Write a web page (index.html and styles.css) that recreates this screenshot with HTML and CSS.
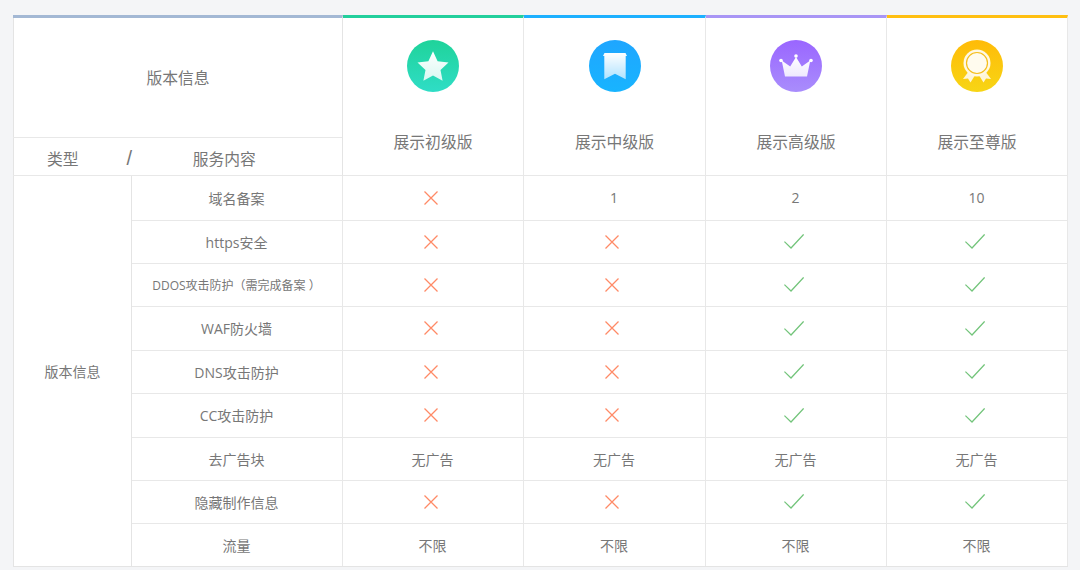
FILE: index.html
```html
<!DOCTYPE html>
<html lang="zh-CN">
<head>
<meta charset="utf-8">
<title>版本信息</title>
<link rel="stylesheet" href="styles.css">
</head>
<body>
<svg class="defs" width="0" height="0" aria-hidden="true">
  <defs>
    <symbol id="no" viewBox="0 0 14 14"><path d="M.5.5l13 13M13.5.5l-13 13" fill="none" stroke="currentColor" stroke-width="1.25"/></symbol>
    <symbol id="yes" viewBox="0 0 20 15"><path d="M.4 7.600l6.600 6.400L19.600.4" fill="none" stroke="currentColor" stroke-width="1.25"/></symbol>
    <linearGradient id="fade" x1="0" y1="0" x2="0" y2="1"><stop offset="0" stop-color="#fff"/><stop offset="1" stop-color="#fff" stop-opacity=".82"/></linearGradient>
    <linearGradient id="fadeBlue" x1="0" y1="0" x2="0" y2="1"><stop offset="0" stop-color="#fff"/><stop offset="1" stop-color="#fff" stop-opacity=".65"/></linearGradient>
  </defs>
</svg>
<main class="plans">
  <div class="corner">
    <div class="corner-title">版本信息</div>
    <div class="corner-legend"><span>类型</span><span class="slash">/</span><span>服务内容</span></div>
  </div>
  <div class="plan plan-green">
    <svg class="badge" viewBox="0 0 52 52"><defs><linearGradient id="g1" x1="0" y1="0" x2="0" y2="1"><stop offset="0" stop-color="#1fd39a"/><stop offset="1" stop-color="#2fddc6"/></linearGradient></defs><circle cx="26" cy="26" r="26" fill="url(#g1)"/><path d="M26 11.200l4.600 10 10.900 1.300-8 7.500 2.100 10.800-9.600-5.400-9.600 5.400 2.100-10.800-8-7.500 10.900-1.300z" fill="url(#fade)" stroke-linejoin="round"/></svg>
    <div class="plan-name">展示初级版</div>
  </div>
  <div class="plan plan-blue">
    <svg class="badge" viewBox="0 0 52 52"><defs><linearGradient id="g2" x1="0" y1="0" x2="0" y2="1"><stop offset="0" stop-color="#1fa6ff"/><stop offset="1" stop-color="#18b4ff"/></linearGradient></defs><circle cx="26" cy="26" r="26" fill="url(#g2)"/><path d="M15.500 13h21l1.500 3h-1.300v23.300L26 33.800l-10.700 5.500V16H14z" fill="url(#fadeBlue)"/></svg>
    <div class="plan-name">展示中级版</div>
  </div>
  <div class="plan plan-purple">
    <svg class="badge" viewBox="0 0 52 52"><defs><linearGradient id="g3" x1="0" y1="0" x2="0" y2="1"><stop offset="0" stop-color="#9a66ff"/><stop offset="1" stop-color="#a98dfc"/></linearGradient></defs><circle cx="26" cy="26" r="26" fill="url(#g3)"/><path d="M26 17l5.800 9.600 8.500-6.200-3.300 16.100H15l-3.300-16.100 8.500 6.200z" fill="url(#fade)"/><circle cx="26" cy="16" r="1.800" fill="#fff"/><circle cx="11" cy="20.500" r="1.800" fill="#fff"/><circle cx="41" cy="20.500" r="1.800" fill="#fff"/></svg>
    <div class="plan-name">展示高级版</div>
  </div>
  <div class="plan plan-gold">
    <svg class="badge" viewBox="0 0 52 52"><defs><linearGradient id="g4" x1="0" y1="0" x2="0" y2="1"><stop offset="0" stop-color="#ffbb08"/><stop offset="1" stop-color="#f7d515"/></linearGradient></defs><circle cx="26" cy="26" r="26" fill="url(#g4)"/><path d="M18 31l-6 8 5-.5 2.500 4 5-8zM34 31l6 8-5-.5-2.500 4-5-8z" fill="#fff6d8"/><circle cx="26" cy="23" r="13.500" fill="#fff8e4"/><circle cx="26" cy="23" r="10.500" fill="#fffbee" stroke="#f5be1c" stroke-width="1.200"/></svg>
    <div class="plan-name">展示至尊版</div>
  </div>

  <div class="group">版本信息</div>

  <div class="feature">域名备案</div>
  <div class="cell"><svg class="mark no"><use href="#no"/></svg></div>
  <div class="cell">1</div><div class="cell">2</div><div class="cell">10</div>

  <div class="feature">https安全</div>
  <div class="cell"><svg class="mark no"><use href="#no"/></svg></div>
  <div class="cell"><svg class="mark no"><use href="#no"/></svg></div>
  <div class="cell"><svg class="mark yes"><use href="#yes"/></svg></div>
  <div class="cell"><svg class="mark yes"><use href="#yes"/></svg></div>

  <div class="feature feature-small">DDOS攻击防护（需完成备案 ）</div>
  <div class="cell"><svg class="mark no"><use href="#no"/></svg></div>
  <div class="cell"><svg class="mark no"><use href="#no"/></svg></div>
  <div class="cell"><svg class="mark yes"><use href="#yes"/></svg></div>
  <div class="cell"><svg class="mark yes"><use href="#yes"/></svg></div>

  <div class="feature">WAF防火墙</div>
  <div class="cell"><svg class="mark no"><use href="#no"/></svg></div>
  <div class="cell"><svg class="mark no"><use href="#no"/></svg></div>
  <div class="cell"><svg class="mark yes"><use href="#yes"/></svg></div>
  <div class="cell"><svg class="mark yes"><use href="#yes"/></svg></div>

  <div class="feature">DNS攻击防护</div>
  <div class="cell"><svg class="mark no"><use href="#no"/></svg></div>
  <div class="cell"><svg class="mark no"><use href="#no"/></svg></div>
  <div class="cell"><svg class="mark yes"><use href="#yes"/></svg></div>
  <div class="cell"><svg class="mark yes"><use href="#yes"/></svg></div>

  <div class="feature">CC攻击防护</div>
  <div class="cell"><svg class="mark no"><use href="#no"/></svg></div>
  <div class="cell"><svg class="mark no"><use href="#no"/></svg></div>
  <div class="cell"><svg class="mark yes"><use href="#yes"/></svg></div>
  <div class="cell"><svg class="mark yes"><use href="#yes"/></svg></div>

  <div class="feature">去广告块</div>
  <div class="cell">无广告</div><div class="cell">无广告</div><div class="cell">无广告</div><div class="cell">无广告</div>

  <div class="feature">隐藏制作信息</div>
  <div class="cell"><svg class="mark no"><use href="#no"/></svg></div>
  <div class="cell"><svg class="mark no"><use href="#no"/></svg></div>
  <div class="cell"><svg class="mark yes"><use href="#yes"/></svg></div>
  <div class="cell"><svg class="mark yes"><use href="#yes"/></svg></div>

  <div class="feature">流量</div>
  <div class="cell">不限</div><div class="cell">不限</div><div class="cell">不限</div><div class="cell">不限</div>
</main>
</body>
</html>
```
FILE: styles.css
```css
* { box-sizing: border-box; }
html, body { margin: 0; height: 570px; overflow: hidden; }
body {
  background: #f4f5f7;
  padding: 15px 12px 0 13px;
  font-family: "Open Sans", "Noto Sans CJK SC", sans-serif;
  font-size: 14px;
  color: #777;
}
.defs { position: absolute; }
.plans {
  display: grid;
  width: 1055px;
  grid-template-columns: 118px 211px 181px 182px 181px 181px;
  grid-template-rows: 161px 45px 43px 43px 44px 43px 44px 43px 43px 42px;
  background: #fff;
  border-left: 1px solid #e4e4e4;
  border-bottom: 1px solid #e4e4e4;
}
.corner {
  grid-column: 1 / 3;
  display: flex;
  flex-direction: column;
  border-top: 3px solid #a3b8d4;
  border-right: 1px solid #e4e4e4;
  border-bottom: 1px solid #e8e8e8;
  font-size: 15.8px;
  margin-left: -1px;
}
.corner-title {
  height: 120px;
  flex: none;
  display: flex;
  align-items: center;
  justify-content: center;
  padding: 0 0 0 1px;
  border-bottom: 1px solid #e8e8e8;
}
.corner-legend {
  flex: 1;
  display: flex;
  align-items: center;
  padding: 5px 0 0 34px;
  line-height: 24px;
}
.slash {
  margin: 0 60.500px 0 48px;
  font-family: "Liberation Sans", sans-serif;
  font-size: 20px;
  line-height: 20px;
  position: relative;
  top: -1px;
}
.plan {
  display: flex;
  flex-direction: column;
  align-items: center;
  border-top: 3px solid;
  border-right: 1px solid #e8e8e8;
  border-bottom: 1px solid #e8e8e8;
  padding-top: 22px;
  font-size: 15.8px;
}
.plan-green { border-top-color: #23cf9c; }
.plan-blue { border-top-color: #1cb0ff; }
.plan-purple { border-top-color: #a895f5; }
.plan-gold { border-top-color: #ffbf10; }
.badge { width: 52px; height: 52px; flex: none; }
.plan-name { margin-top: 38px; line-height: 24px; }
.group {
  grid-row: 2 / 11;
  display: flex;
  align-items: center;
  justify-content: center;
  border-right: 1px solid #e4e4e4;
}
.feature, .cell {
  display: flex;
  align-items: center;
  justify-content: center;
  border-right: 1px solid #e8e8e8;
  border-bottom: 1px solid #e8e8e8;
  padding-bottom: 1px;
}
.feature { padding-right: 1px; }
.feature-small { font-size: 12px; }
.cell { padding-right: 1px; }
.feature:nth-last-child(5), .cell:nth-last-child(-n+4) { border-bottom: 0; padding-bottom: 0; }
.mark { flex: none; margin-right: 4px; }
.no { width: 14px; height: 14px; color: #ff8a66; }
.yes { width: 20px; height: 15px; color: #72c47a; }
```
